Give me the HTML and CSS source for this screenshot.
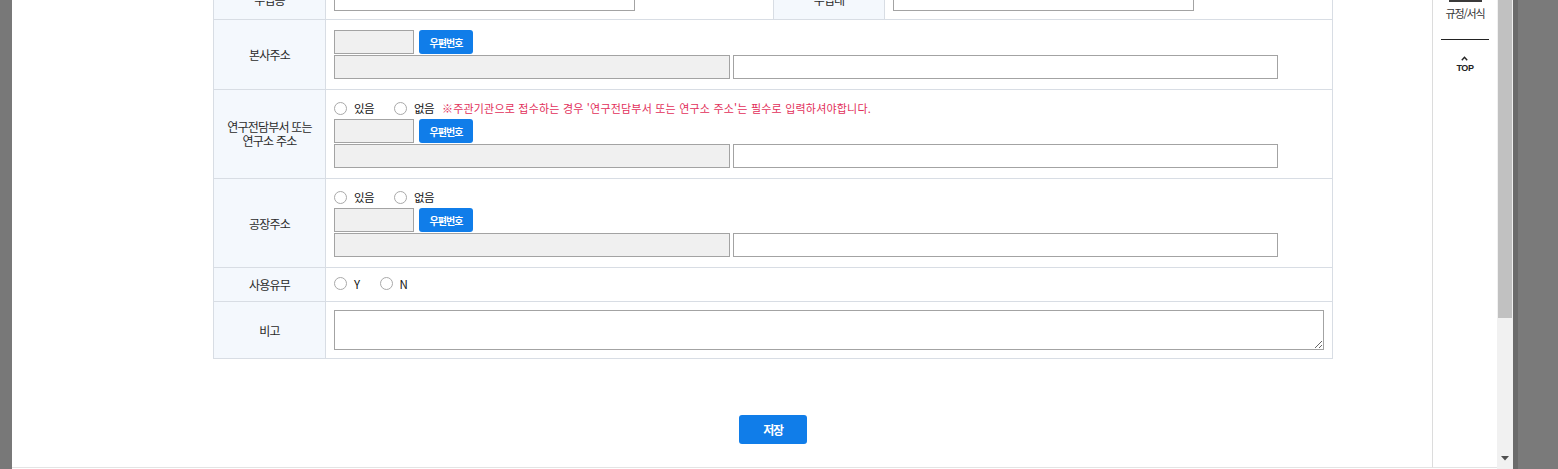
FILE: index.html
```html
<!DOCTYPE html>
<html lang="ko">
<head>
<meta charset="utf-8">
<title>기관정보</title>
<link rel="stylesheet" href="styles.css">
</head>
<body>
<div class="screen">
  <div class="dim dim-left"></div>
  <div class="popup">
    <div class="main">
      <div class="form">
        <div class="th">주업종</div>
        <div class="td td-top"><input class="ipt w301" type="text"></div>
        <div class="th">주업태</div>
        <div class="td td-top"><input class="ipt w301" type="text"></div>

        <div class="th">본사주소</div>
        <div class="td span3 td-addr">
          <div class="line gap5"><input class="ipt zip" type="text" readonly><button class="btn-zip" type="button">우편번호</button></div>
          <div class="line gap3"><input class="ipt addr1" type="text" readonly><input class="ipt addr2" type="text"></div>
        </div>

        <div class="th th-2line">연구전담부서 또는<br>연구소 주소</div>
        <div class="td span3 td-addr">
          <div class="line radios">
            <label class="radio"><input type="radio" name="lab"><span>있음</span></label>
            <label class="radio"><input type="radio" name="lab"><span>없음</span></label>
            <span class="note">※주관기관으로 접수하는 경우 '연구전담부서 또는 연구소 주소'는 필수로 입력하셔야합니다.</span>
          </div>
          <div class="line gap5"><input class="ipt zip" type="text" readonly><button class="btn-zip" type="button">우편번호</button></div>
          <div class="line gap3"><input class="ipt addr1" type="text" readonly><input class="ipt addr2" type="text"></div>
        </div>

        <div class="th">공장주소</div>
        <div class="td span3 td-addr">
          <div class="line radios">
            <label class="radio"><input type="radio" name="factory"><span>있음</span></label>
            <label class="radio"><input type="radio" name="factory"><span>없음</span></label>
          </div>
          <div class="line gap5"><input class="ipt zip" type="text" readonly><button class="btn-zip" type="button">우편번호</button></div>
          <div class="line gap3"><input class="ipt addr1" type="text" readonly><input class="ipt addr2" type="text"></div>
        </div>

        <div class="th">사용유무</div>
        <div class="td span3 td-use">
          <div class="line radios">
            <label class="radio"><input type="radio" name="use"><span>Y</span></label>
            <label class="radio"><input type="radio" name="use"><span>N</span></label>
          </div>
        </div>

        <div class="th">비고</div>
        <div class="td span3 td-memo"><textarea class="memo"></textarea></div>
      </div>
      <div class="actions"><button class="btn-save" type="button">저장</button></div>
    </div>
    <aside class="quick">
      <span class="quick-icon"></span>
      <a class="quick-link">규정/서식</a>
      <span class="quick-divider"></span>
      <a class="quick-top">
        <svg class="caret" width="7" height="5" viewBox="0 0 7 5"><polyline points="0.8,4.2 3.5,1.2 6.2,4.2" fill="none" stroke="#222" stroke-width="1.4"/></svg>
        <span>TOP</span>
      </a>
    </aside>
    <div class="scrollbar">
      <div class="thumb"></div>
      <svg class="arrow" width="8" height="5" viewBox="0 0 8 5"><polygon points="0,0 8,0 4,4.5" fill="#505050"/></svg>
    </div>
  </div>
  <div class="dim dim-right"></div>
</div>
</body>
</html>
```

FILE: styles.css
```css
html, body {
  margin: 0;
  padding: 0;
}
body {
  font-family: "Noto Sans CJK KR", "Noto Sans", sans-serif;
  font-size: 12px;
  color: #333;
  background: #797979;
  overflow: hidden;
}
.screen {
  display: flex;
  width: 1558px;
  height: 469px;
}
.dim-left {
  width: 12px;
  background: #787878;
}
.dim-right {
  flex: 1;
  background: #7a7a7a;
  border-left: 5px solid #6b6b6b;
}
.popup {
  width: 1501px;
  display: flex;
  background: #fff;
}
.main {
  width: 1420px;
  height: 468px;
  box-sizing: border-box;
  border-bottom: 1px solid #e4e4e4;
  overflow: hidden;
}

/* form grid */
.form {
  margin: -21px 0 0 201px;
  width: 1120px;
  box-sizing: border-box;
  border-right: 1px solid #d8dde4;
  display: grid;
  grid-template-columns: 112px 448px 111px 448px;
}
.th, .td {
  box-sizing: border-box;
  border-left: 1px solid #d8dde4;
  border-bottom: 1px solid #d8dde4;
}
.th {
  background: #f4f8fd;
  display: flex;
  align-items: center;
  justify-content: center;
  text-align: center;
  font-size: 12px;
  letter-spacing: -0.8px;
  color: #2a2a2a;
}
.th-2line {
  line-height: 14px;
}
.td {
  display: flex;
  flex-direction: column;
  gap: 1px;
  padding: 8px 8px;
}
.span3 {
  grid-column: span 3;
}
.td-addr {
  padding: 10px 8px;
}
.td-use {
  padding: 7px 8px 9px;
}
.td-memo {
  padding: 8px 8px;
}
.line {
  display: flex;
  align-items: center;
}
.gap5 { gap: 5px; }
.gap3 { gap: 3px; }
.radios {
  height: 18px;
  align-items: flex-start;
}
.td-use .radios {
  height: 17px;
  align-items: center;
}

.ipt {
  box-sizing: border-box;
  height: 24px;
  margin: 0;
  padding: 0 4px;
  border: 1px solid #a3a3a3;
  border-radius: 0;
  background: #fff;
  font-family: inherit;
  font-size: 12px;
  outline: none;
}
.ipt[readonly] {
  background: #f0f0f0;
}
.w301 { width: 301px; }
.zip { width: 80px; }
.addr1 { width: 396px; }
.addr2 { width: 545px; }

.btn-zip {
  box-sizing: border-box;
  width: 54px;
  height: 24px;
  margin: 0;
  padding: 0;
  border: 0;
  border-radius: 3px;
  background: #107de9;
  color: #fff;
  font-family: inherit;
  font-size: 10px;
  font-weight: 700;
  letter-spacing: -1px;
}

.radio {
  display: inline-flex;
  align-items: center;
  gap: 7px;
  height: 16px;
  line-height: 16px;
  font-size: 11.5px;
  letter-spacing: -0.6px;
  color: #111;
}
.radio + .radio {
  margin-left: 20px;
}
.radio input {
  appearance: none;
  -webkit-appearance: none;
  box-sizing: border-box;
  width: 13px;
  height: 13px;
  margin: 0;
  border: 1px solid #a9a9a9;
  border-radius: 50%;
  background: #fff;
}
.note {
  margin-left: 8px;
  height: 16px;
  line-height: 16px;
  font-size: 11px;
  letter-spacing: 0.2px;
  color: #e2305b;
}

.memo {
  box-sizing: border-box;
  width: 990px;
  height: 40px;
  margin: 0;
  border: 1px solid #a3a3a3;
  border-radius: 0;
  font-family: inherit;
  display: block;
}

.actions {
  width: 1120px;
  margin: 56px 0 0 201px;
  display: flex;
  justify-content: center;
}
.btn-save {
  width: 68px;
  height: 29px;
  border: 0;
  border-radius: 3px;
  background: #107de9;
  color: #fff;
  font-family: inherit;
  font-size: 12px;
  font-weight: 700;
  letter-spacing: -1.2px;
  padding: 0;
}

/* quick menu */
.quick {
  width: 65px;
  height: 468px;
  box-sizing: border-box;
  border-left: 1px solid #dcdcdc;
  border-bottom: 1px solid #e4e4e4;
  display: flex;
  flex-direction: column;
  align-items: center;
}
.quick-icon {
  display: block;
  width: 33px;
  height: 2px;
  background: #3a3a3a;
}
.quick-link {
  margin-top: 4px;
  line-height: 14px;
  font-size: 11px;
  letter-spacing: -1.2px;
  color: #333;
}
.quick-divider {
  display: block;
  width: 48px;
  height: 1px;
  margin-top: 19px;
  background: #222;
}
.quick-top {
  margin-top: 16px;
  display: flex;
  flex-direction: column;
  align-items: center;
  gap: 2px;
  font-family: "Liberation Sans", sans-serif;
  font-size: 9px;
  font-weight: 700;
  letter-spacing: -0.4px;
  color: #222;
  line-height: 10px;
}
.caret {
  display: block;
}

/* scrollbar */
.scrollbar {
  width: 16px;
  background: #f1f1f1;
  display: flex;
  flex-direction: column;
  justify-content: space-between;
  align-items: center;
}
.thumb {
  width: 14px;
  height: 318px;
  background: #c1c1c1;
}
.arrow {
  display: block;
  margin-bottom: 8px;
}
```
